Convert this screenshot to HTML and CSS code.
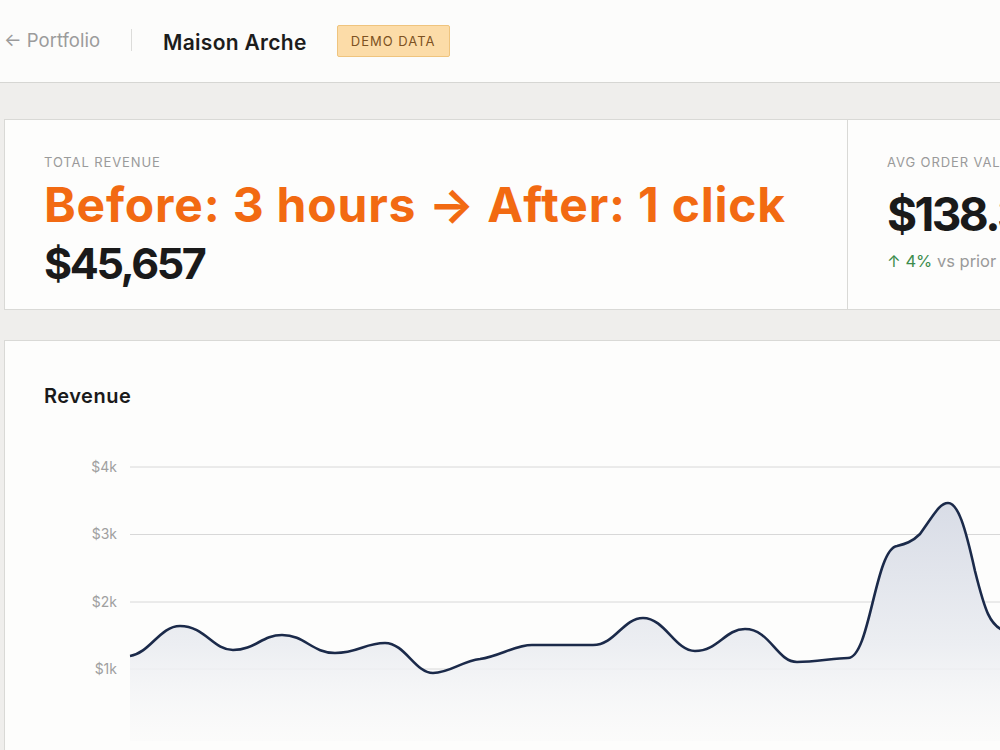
FILE: index.html
```html
<!DOCTYPE html>
<html lang="en">
<head>
    <meta charset="UTF-8">
    <title>Maison Arche</title>
    <meta name="viewport" content="width=device-width, initial-scale=1.0">
    <link rel="stylesheet" href="styles.css">
</head>
<body>

    <!-- Top bar -->
    <header class="topbar">
        <a href="#" class="back-link">&larr; Portfolio</a>
        <span class="divider"></span>
        <h1 class="brand">Maison Arche</h1>
        <span class="badge">DEMO DATA</span>
    </header>

    <main class="page">
        <!-- KPI row -->
        <section class="kpi-row">
            <div class="kpi kpi-wide">
                <div class="kpi-label">TOTAL REVENUE</div>
                <div class="kpi-headline">Before: 3 hours &rarr; After: 1 click</div>
                <div class="kpi-value">$45,657</div>
            </div>
            <div class="kpi">
                <div class="kpi-label">AVG ORDER VALUE</div>
                <div class="kpi-value kpi-value-lg">$138.35</div>
                <div class="kpi-delta"><span class="up">&uarr; 4%</span> vs prior period</div>
            </div>
        </section>

        <!-- Revenue chart -->
        <section class="chart-card">
            <h2 class="chart-title">Revenue</h2>
            <svg class="chart" width="1100" height="320" viewBox="44 440 1100 320">
                <defs>
                    <linearGradient id="area-fill" gradientUnits="userSpaceOnUse" x1="0" y1="500" x2="0" y2="740">
                        <stop offset="0" stop-color="#d8dce6"/>
                        <stop offset="0.6" stop-color="#eceef2"/>
                        <stop offset="1" stop-color="#f8f8f8" stop-opacity="0.4"/>
                    </linearGradient>
                </defs>

                <!-- grid -->
                <g class="grid">
                    <line x1="130" y1="466" x2="1144" y2="466"/>
                    <line x1="130" y1="533.5" x2="1144" y2="533.5"/>
                    <line x1="130" y1="601" x2="1144" y2="601"/>
                    <line x1="130" y1="668" x2="1144" y2="668"/>
                </g>
                <g class="axis">
                    <text x="117" y="471">$4k</text>
                    <text x="117" y="538">$3k</text>
                    <text x="117" y="606">$2k</text>
                    <text x="117" y="673">$1k</text>
                </g>

                <!-- series -->
                <path class="area" d="M130,655 C150,652 160,625 180,625 C205,625 213,649 233,649 C255,649 262,634 282,634 C305,634 312,652 335,652 C358,652 365,642 385,642 C405,642 415,672 433,672 C450,672 462,660 480,658 C500,655 515,644 532,644 L593,644 C615,644 623,617 643,617 C665,617 675,650 695,650 C718,650 725,628 745,628 C770,628 777,661 797,661 C815,661 835,657 848,657 C870,657 875,548 897,545 C905,543 912,541 920,533 C935,512 940,502 948,502 C958,502 965,525 975,570 C985,610 990,625 1005,630 C1030,636 1060,640 1144,645 L1144,740 L130,740 Z"/>
                <path class="line" d="M130,655 C150,652 160,625 180,625 C205,625 213,649 233,649 C255,649 262,634 282,634 C305,634 312,652 335,652 C358,652 365,642 385,642 C405,642 415,672 433,672 C450,672 462,660 480,658 C500,655 515,644 532,644 L593,644 C615,644 623,617 643,617 C665,617 675,650 695,650 C718,650 725,628 745,628 C770,628 777,661 797,661 C815,661 835,657 848,657 C870,657 875,548 897,545 C905,543 912,541 920,533 C935,512 940,502 948,502 C958,502 965,525 975,570 C985,610 990,625 1005,630 C1030,636 1060,640 1144,645"/>
            </svg>
        </section>
    </main>

</body>
</html>
```

FILE: styles.css
```css
/* Base */
body {
    margin: 0;
    font-family: 'Inter', 'Liberation Sans', sans-serif;
    background-color: #efeeec;
    color: #1a1a1a;
    overflow: hidden;
}

/* Top bar */
.topbar {
    height: 83px;
    box-sizing: border-box;
    display: flex;
    align-items: center;
    gap: 31px;
    padding-left: 4px;
    background-color: #fcfcfb;
    border-bottom: 1px solid #d6d6d3;
}

.back-link {
    font-size: 18.5px;
    color: #9b9b9b;
    text-decoration: none;
    margin-top: -3px;
}

.divider {
    width: 1px;
    height: 22px;
    background-color: #dcdcda;
    margin-top: -2px;
}

.brand {
    margin: 0;
    font-size: 21px;
    font-weight: 600;
    letter-spacing: 0.3px;
    color: #1c1c1c;
    margin-top: 2px;
}

.badge {
    display: inline-block;
    box-sizing: border-box;
    width: 113px;
    height: 32px;
    line-height: 30px;
    text-align: center;
    font-size: 13px;
    letter-spacing: 1px;
    color: #7d5222;
    background-color: #fcdca8;
    border: 1px solid #efc47e;
    border-radius: 2px;
    margin-left: -1px;
}

/* Main area */
.page {
    width: 1300px;
    padding: 36px 0 0 4px;
}

/* KPI cards */
.kpi-row {
    display: flex;
    height: 189px;
    background-color: #fdfdfc;
    border: 1px solid #d9d9d6;
}

.kpi {
    padding: 34px 0 0 39px;
    box-sizing: border-box;
}

.kpi-wide {
    width: 843px;
    border-right: 1px solid #d9d9d6;
}

.kpi-label {
    font-size: 13px;
    line-height: 16px;
    letter-spacing: 0.9px;
    color: #9a9a9a;
}

.kpi-headline {
    margin-top: 7px;
    font-size: 48px;
    font-weight: 700;
    letter-spacing: 0.8px;
    color: #f26a12;
    line-height: 56px;
}

.kpi-value {
    margin-top: 6px;
    font-size: 43px;
    font-weight: 700;
    letter-spacing: -2.4px;
    line-height: 48px;
    color: #1a1a1a;
}

.kpi-value-lg {
    margin-top: 20px;
    font-size: 46px;
    letter-spacing: -2.6px;
}

.kpi-delta {
    margin-top: 13px;
    font-size: 16.5px;
    line-height: 20px;
    color: #9a9a9a;
}

.kpi-delta .up {
    color: #3c8c4c;
}

/* Chart card */
.chart-card {
    margin-top: 30px;
    height: 500px;
    padding: 43px 0 0 39px;
    background-color: #fdfdfc;
    border: 1px solid #d9d9d6;
}

.chart-title {
    margin: 0;
    font-size: 20px;
    font-weight: 600;
    letter-spacing: 0.5px;
    color: #1a1a1a;
}

.chart {
    display: block;
    margin-top: 33px;
}

.grid line {
    stroke: #d8d8d8;
    stroke-width: 1;
}

.axis text {
    font-family: 'Inter', 'Liberation Sans', sans-serif;
    font-size: 14px;
    fill: #a0a0a0;
    text-anchor: end;
}

.area {
    fill: url(#area-fill);
}

.line {
    fill: none;
    stroke: #1b2a4a;
    stroke-width: 2.6;
    stroke-linejoin: round;
}
```
